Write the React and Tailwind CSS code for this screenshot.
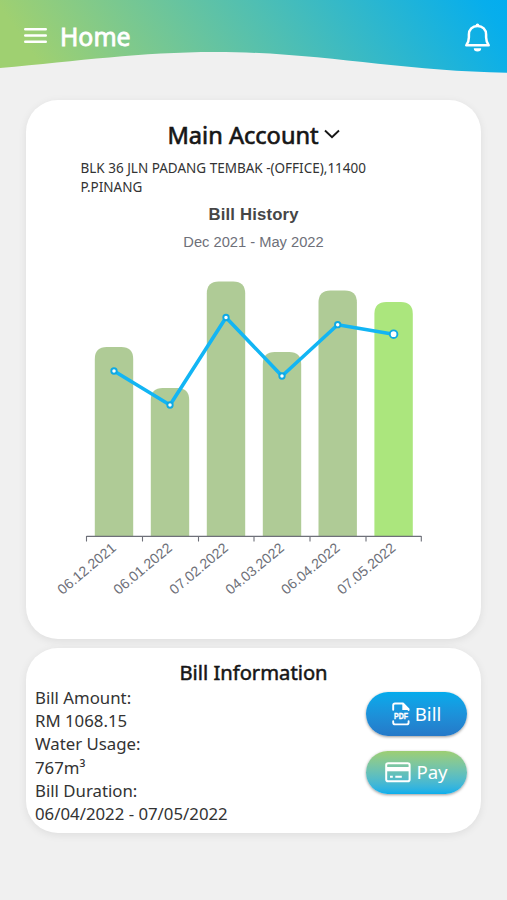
const bills = [
  { date: '06.12.2021', x: 114, top: 347, usage: 371 },
  { date: '06.01.2022', x: 170, top: 388, usage: 405 },
  { date: '07.02.2022', x: 226, top: 281.5, usage: 317.5 },
  { date: '04.03.2022', x: 282, top: 352, usage: 376 },
  { date: '06.04.2022', x: 337.7, top: 290.5, usage: 324.7 },
  { date: '07.05.2022', x: 393.6, top: 302, usage: 334.2, current: true },
];

const ticks = [86.5, 142.5, 198.5, 254, 310, 366, 421.3];
const BASE = 536;

// Bar with only the top corners rounded
const barPath = (x, top) =>
  `M${x - 19.2} ${BASE}V${top + 12}q0 -12 12 -12h14.4q12 0 12 12V${BASE}z`;

function Header() {
  return (
    <header className="relative h-[100px] shrink-0 text-white">
      <svg className="absolute inset-0" width="507" height="80" viewBox="0 0 507 80">
        <defs>
          <linearGradient id="wave" x1="0" y1="0.1" x2="1" y2="0">
            <stop offset="0" stopColor="#9fd071" />
            <stop offset="0.5" stopColor="#50bfb2" />
            <stop offset="0.95" stopColor="#07aeec" />
            <stop offset="1" stopColor="#03adef" />
          </linearGradient>
        </defs>
        <path d="M0 0H507V72.7C400 71.5 320 52 215 52C140 52 80 61 0 68Z" fill="url(#wave)" />
      </svg>
      <div className="relative flex h-[72px] items-center pr-4 pl-6">
        <svg className="-mt-0.5" width="23" height="17" viewBox="0 0 23 17" stroke="currentColor" strokeWidth="2.4" strokeLinecap="round">
          <path d="M1.2 2.2H21.8M1.2 8.5H21.8M1.2 14.8H21.8" />
        </svg>
        <h1 className="ml-[13px] text-[24.8px] leading-none [-webkit-text-stroke:0.8px_white]">Home</h1>
        <svg className="ml-auto mt-[3px]" width="27" height="31" viewBox="0 0 27 31" fill="none">
          <path
            d="M2.3 23.2H24.7C22.8 20.8 22.1 18.7 22.1 15.3V12.6C22.1 7.6 18.6 4.1 13.5 4.1S4.9 7.6 4.9 12.6V15.3C4.9 18.7 4.2 20.8 2.3 23.2Z"
            stroke="currentColor"
            strokeWidth="2.5"
            strokeLinejoin="round"
          />
          <path d="M11.7 3.2a1.8 1.8 0 0 1 3.6 0v1.5h-3.6zM9.8 26.2h7.4a3.7 3.2 0 0 1-7.4 0z" fill="currentColor" />
        </svg>
      </div>
    </header>
  );
}

function BillChart() {
  return (
    <svg className="block font-['Liberation_Sans',Arial,sans-serif]" width="455" height="439" viewBox="26 200 455 439">
      <text x="253.5" y="220" textAnchor="middle" fontSize="16.7" textLength="90" fontWeight="700" fill="#464646">Bill History</text>
      <text x="253.5" y="247" textAnchor="middle" fontSize="14.7" fill="#6e7079">Dec 2021 - May 2022</text>
      {bills.map((b) => (
        <path key={b.date} d={barPath(b.x, b.top)} fill={b.current ? '#abe67d' : '#afcb96'} />
      ))}
      <path
        d={`M86.5 ${BASE + 0.4}H421.3${ticks.map((t) => `M${t} ${BASE}v5.5`).join('')}`}
        stroke="#6e7079"
        strokeWidth="1.1"
        fill="none"
      />
      <polyline
        points={bills.map((b) => `${b.x},${b.usage}`).join(' ')}
        fill="none"
        stroke="#12b5f4"
        strokeWidth="3.6"
        strokeLinejoin="bevel"
      />
      {bills.map((b) => (
        <circle
          key={b.date}
          cx={b.x}
          cy={b.usage}
          r={b.current ? 3.8 : 2.7}
          fill="#fff"
          stroke="#0ea9e4"
          strokeWidth="1.9"
        />
      ))}
      {bills.map((b) => (
        <text
          key={b.date}
          transform={`translate(${b.x + 3} 549.5) rotate(-40)`}
          textAnchor="end"
          fontSize="14.2"
          fill="#6e7079"
        >
          {b.date}
        </text>
      ))}
    </svg>
  );
}

function PdfIcon() {
  return (
    <svg className="overflow-visible" width="18" height="24" viewBox="0 0 18 24" fill="none">
      <path
        d="M1.2 7.8V3.3Q1.2 1.5 3 1.5H11L16.6 7.2V8M1.2 19.2V20.4Q1.2 22.4 3.2 22.4H14.6Q16.6 22.4 16.6 20.4V19.2"
        stroke="currentColor"
        strokeWidth="1.9"
        strokeLinejoin="round"
        strokeLinecap="round"
      />
      <path d="M10.3 1.5L17.2 8H10.3z" fill="currentColor" />
      <text
        x="2"
        y="17.2"
        textLength="14"
        lengthAdjust="spacingAndGlyphs"
        fontSize="9.6"
        fontWeight="700"
        fill="currentColor"
        stroke="currentColor"
        strokeWidth="0.4"
        className="font-['Liberation_Sans',sans-serif]"
      >
        PDF
      </text>
    </svg>
  );
}

function CardIcon() {
  return (
    <svg width="26" height="21" viewBox="0 0 26 21" fill="none">
      <rect x="1.2" y="1.2" width="23.4" height="18" rx="1.8" stroke="currentColor" strokeWidth="2" />
      <path d="M1 5H25V9.3H1z" fill="currentColor" />
      <path d="M5 14.8H7.8M10.3 14.8H16.8" stroke="currentColor" strokeWidth="1.9" />
    </svg>
  );
}

export default function App() {
  return (
    <div className="flex h-[900px] w-[507px] flex-col overflow-hidden bg-[#f0f0f0] font-['Noto_Sans',sans-serif] text-[#333]">
      <Header />
      <main className="flex flex-col gap-[9px] px-[26px]">
        <section className="flex h-[539px] flex-col justify-between rounded-[32px] bg-white shadow-[0_2px_8px_rgba(0,0,0,0.08)]">
          <div>
            <div className="mt-[19px] flex items-center justify-center text-[#161616]">
              <h2 className="text-[23.6px] leading-8 [-webkit-text-stroke:0.65px_#161616]">Main Account</h2>
              <svg className="-mt-0.5 ml-[5px]" width="16" height="10" viewBox="0 0 16 10" fill="none" stroke="currentColor" strokeWidth="1.9">
                <path d="M1 1.5L8 8.3L15 1.5" />
              </svg>
            </div>
            <p className="mt-2 ml-[54.5px] w-[310px] text-[13.5px] leading-[18.6px]">
              BLK 36 JLN PADANG TEMBAK -(OFFICE),11400
              <br />
              P.PINANG
            </p>
          </div>
          <BillChart />
        </section>

        <section className="h-[185px] rounded-[32px] bg-white px-[9px] pt-2.5 shadow-[0_2px_8px_rgba(0,0,0,0.08)]">
          <h2 className="text-center text-[20.2px] leading-7 text-[#161616] [-webkit-text-stroke:0.5px_#161616]">
            Bill Information
          </h2>
          <div className="flex justify-between">
            <div className="text-[16.8px] leading-[23.2px]">
              <p>Bill Amount:</p>
              <p>RM 1068.15</p>
              <p>Water Usage:</p>
              <p>767m³</p>
              <p>Bill Duration:</p>
              <p>06/04/2022 - 07/05/2022</p>
            </div>
            <div className="mt-1.5 mr-[5px] flex flex-col gap-[15px] text-[18.6px] text-white">
              <button className="flex h-[43.5px] w-[101px] items-center justify-center gap-[5px] rounded-full bg-linear-to-b from-[#03abec] to-[#2579c8] shadow-[0_1px_3px_rgba(0,0,0,0.4)]">
                <PdfIcon />
                Bill
              </button>
              <button className="flex h-[43.5px] w-[101px] items-center justify-center gap-[5px] rounded-full bg-linear-to-b from-[#9dce72] to-[#07aeec] shadow-[0_1px_3px_rgba(0,0,0,0.4)]">
                <CardIcon />
                Pay
              </button>
            </div>
          </div>
        </section>
      </main>
    </div>
  );
}
